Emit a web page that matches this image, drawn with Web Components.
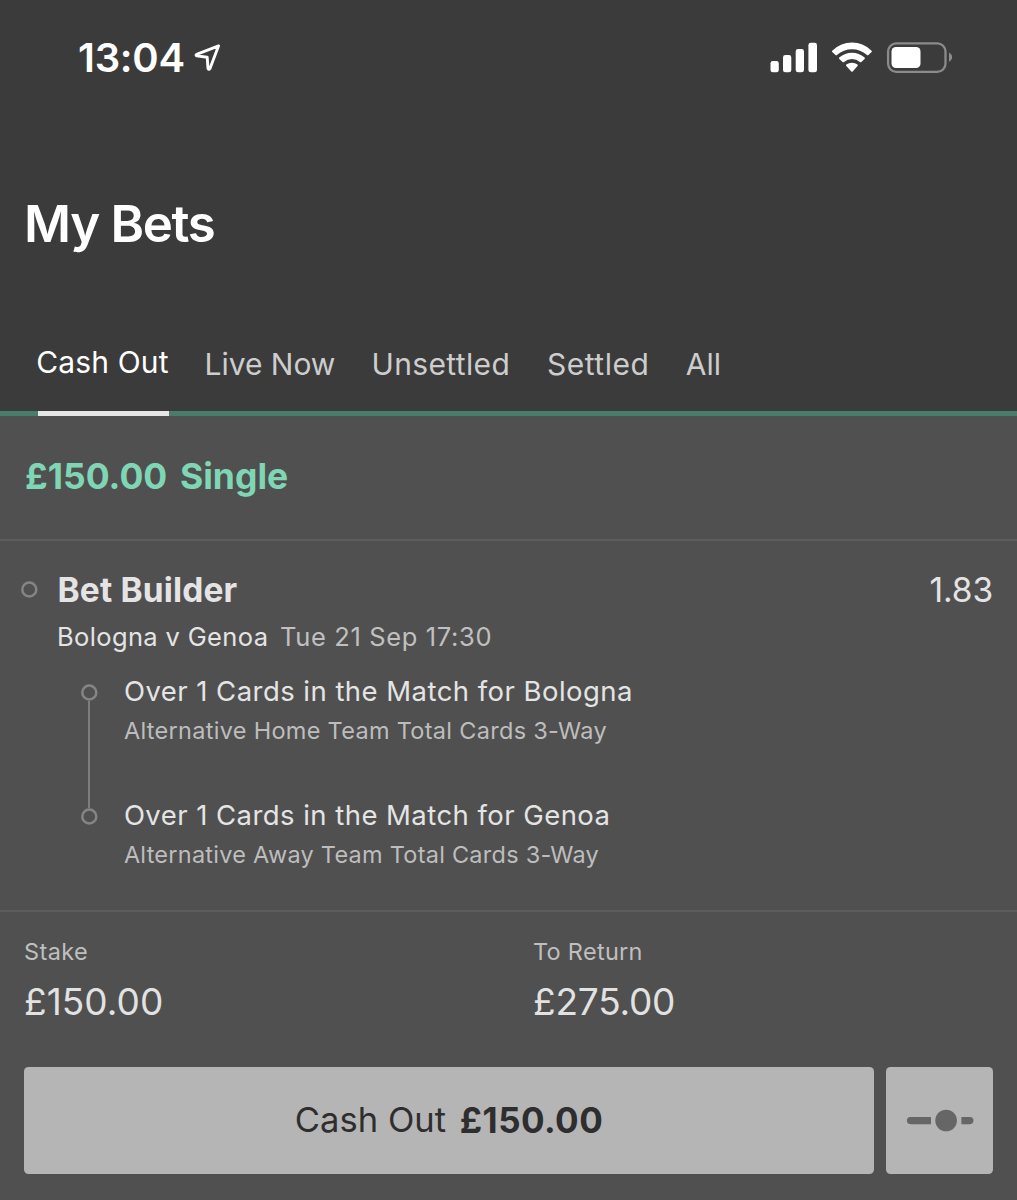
<!DOCTYPE html>
<html lang="en">
<head>
<meta charset="utf-8">
<title>My Bets</title>
<style>
html,body{margin:0;background:#505050}
body{font-family:Inter,"Noto Sans",sans-serif;width:1017px;height:1200px;overflow:hidden}
</style>
</head>
<body>
<bets-screen></bets-screen>
<script>
const define = (name, html, init) => customElements.define(name, class extends HTMLElement {
  connectedCallback() {
    if (this.shadowRoot) return;
    const root = this.attachShadow({ mode: 'open' });
    root.innerHTML = html;
    if (init) init.call(this, root);
  }
});

/* A single line of text: size, weight, spacing and line come from attributes. */
define('text-line', `<style>:host{display:block;white-space:pre;flex:none}</style><slot></slot>`, function () {
  const a = n => this.getAttribute(n);
  this.style.fontSize = a('size') + 'px';
  this.style.lineHeight = a('line') + 'px';
  this.style.fontWeight = a('weight') || 400;
  this.style.letterSpacing = (a('spacing') || 0) + 'px';
});

define('status-bar', `<style>
:host{display:flex;justify-content:space-between;height:115px;box-sizing:border-box;padding:0 65px 0 78px;align-items:center;color:#fff}
.time,.icons{display:flex;align-items:center}
.time svg{margin-left:9px}
svg{display:block}
</style>
<div class="time"><text-line size="40" line="40" weight="600" spacing="-0.25">13:04</text-line>
<svg width="30" height="32" viewBox="194 42 30 32"><path d="M218.6 45.8 L196.6 54.4 Q195.4 55.3 196.8 55.9 L207.2 57.2 L208 68.6 Q208.9 70.2 210 68.6 Z" fill="none" stroke="#fff" stroke-width="2.9" stroke-linejoin="round"/></svg></div>
<div class="icons"><svg width="184" height="36" viewBox="768 40 184 36">
<g fill="#fff"><rect x="770.5" y="61" width="8.3" height="11.3" rx="2.4"/><rect x="783" y="55" width="8.3" height="17.3" rx="2.4"/><rect x="795.7" y="49" width="8.3" height="23.3" rx="2.4"/><rect x="808.4" y="42.8" width="8.6" height="29.5" rx="2.4"/>
<path d="M832.2 50.7 Q841 42.6 852 42.6 Q863 42.6 871.6 50.7 Q872.2 51.4 871.6 52 L868.4 55.1 Q867.7 55.7 867 55.1 Q860.3 49.2 852 49.2 Q843.5 49.2 836.9 55.1 Q836.2 55.7 835.5 55.1 L832.2 52 Q831.7 51.4 832.2 50.7 Z"/>
<path d="M839.2 57.6 Q845 52.7 852 52.7 Q859 52.7 864.6 57.6 Q865.3 58.2 864.6 58.9 L861.3 62 Q860.6 62.6 859.9 62 Q856.5 59.1 852 59.1 Q847.5 59.1 844 62 Q843.3 62.6 842.6 62 L839.3 58.9 Q838.6 58.2 839.2 57.6 Z"/>
<path d="M846.3 64.5 Q848.8 62.7 852 62.7 Q855.1 62.7 857.5 64.5 Q858.2 65.1 857.5 65.9 L852.7 71.4 Q852 72.1 851.3 71.4 L846.3 65.9 Q845.6 65.1 846.3 64.5 Z"/>
<rect x="891.5" y="47" width="29" height="21" rx="4.4"/></g>
<rect x="888.1" y="43.3" width="57.4" height="28.6" rx="8.2" fill="none" stroke="#8b8b8b" stroke-width="2.3"/>
<path d="M949 52.5 Q952.2 54.2 952.2 57.2 Q952.2 60.2 949 61.9Z" fill="#8b8b8b"/>
</svg></div>`);

define('tab-item', `<style>
:host{display:flex;flex-direction:column;justify-content:space-between;flex:none;height:85px;box-sizing:border-box;color:#cdcdcd;padding-top:16px}
:host([active]){color:#fff;padding-top:14px}
i{display:block;width:131px;height:5px;background:#e6e6e6;margin-left:1.7px}
:host(:not([active])) i{display:none}
</style><text-line size="30" line="35"><slot></slot></text-line><i></i>`, function (root) {
  this.style.width = this.getAttribute('width') + 'px';
  const t = root.querySelector('text-line');
  t.setAttribute('spacing', this.getAttribute('spacing'));
  t.style.letterSpacing = this.getAttribute('spacing') + 'px';
});

define('tab-strip', `<style>
:host{display:flex;box-sizing:border-box;height:85px;padding-left:36.3px;background:linear-gradient(#487c6b,#487c6b) bottom/100% 5px no-repeat}
</style><slot></slot>`);

define('top-header', `<style>
:host{display:flex;flex-direction:column;height:416px;background:#3b3b3b;color:#fff}
.title{flex:1;box-sizing:border-box;padding:79px 0 0 24px}
</style><status-bar></status-bar><div class="title"><text-line size="51" line="60" weight="600" spacing="-1.31">My Bets</text-line></div>
<tab-strip><tab-item active width="168.2" spacing="0.14">Cash Out</tab-item><tab-item width="167" spacing="-0.02">Live Now</tab-item><tab-item width="175.5" spacing="0.37">Unsettled</tab-item><tab-item width="138.7" spacing="0.52">Settled</tab-item><tab-item width="80" spacing="0.02">All</tab-item></tab-strip>`);

define('ring-mark', `<style>:host{display:block;flex:none;width:17px;height:17px}svg{display:block}</style>
<svg width="17" height="17" viewBox="0 0 17 17"><circle cx="8.3" cy="8.5" r="7" fill="none" stroke="#858585" stroke-width="2.5"/></svg>`);

define('bet-leg', `<style>
:host{display:flex;height:123.5px}
.rail{width:17px;margin-right:26.4px;padding-top:13px;box-sizing:border-box;display:flex;flex-direction:column;align-items:center}
.rail i{width:2px;flex:1;background:#7d7d7d;margin-bottom:-13px}
:host([last]) .rail i{display:none}
.pick{color:#e4e4e4}.market{color:#bdbdbd}
</style><div class="rail"><ring-mark></ring-mark><i></i></div>
<div><div class="pick"><slot name="pick"></slot></div><div class="market"><slot name="market"></slot></div></div>`);

define('bet-selection', `<style>
:host{display:block;box-sizing:border-box;height:371px;padding-top:28px;border-bottom:2px solid #5d5d5d;color:#e4e4e4}
.head{display:flex;align-items:flex-start;height:40px;padding:1px 24px 0 20.5px;box-sizing:border-box}
.head ring-mark{margin-top:11px}
.head text-line{margin-left:20px}
.head .odds{margin-left:auto}
.match{display:flex;padding:8px 0 0 57px}
.date{color:#c0c0c0;width:240px;margin-left:12.5px}
.legs{padding:14px 0 0 80.5px}
</style><div class="head"><ring-mark></ring-mark><text-line size="33.5" line="40" weight="700" spacing="0.15">Bet Builder</text-line><text-line class="odds" size="33.5" line="40" spacing="-0.08">1.83</text-line></div>
<div class="match"><text-line style="width:210.5px" size="25.5" line="40" spacing="0.36">Bologna v Genoa</text-line><text-line class="date" size="25.5" line="40" spacing="0.64">Tue 21 Sep 17:30</text-line></div>
<div class="legs">
<bet-leg><text-line slot="pick" size="27.5" line="40" spacing="0.46">Over 1 Cards in the Match for Bologna</text-line><text-line slot="market" size="23.5" line="39" spacing="0.3">Alternative Home Team Total Cards 3-Way</text-line></bet-leg>
<bet-leg last><text-line slot="pick" size="27.5" line="40" spacing="0.45">Over 1 Cards in the Match for Genoa</text-line><text-line slot="market" size="23.5" line="39" spacing="0.25">Alternative Away Team Total Cards 3-Way</text-line></bet-leg>
</div>`);

define('money-field', `<style>
:host{display:block;flex:none;width:509px}
.label{color:#bfbfbf}.value{color:#e2e2e2;margin-top:10px}
</style><div class="label"><slot name="label"></slot></div><div class="value"><slot></slot></div>`);

define('slider-icon', `<style>:host{display:block}svg{display:block}</style>
<svg width="68" height="24" viewBox="906 1109 68 24" fill="#666"><path d="M931 1117 H910.5 a3.6 3.6 0 0 0 0 7.2 H931Z M961.4 1117 H969.9 a3.6 3.6 0 0 1 0 7.2 H961.4Z"/><circle cx="946.1" cy="1120.5" r="10.8"/></svg>`);

define('cash-button', `<style>
:host{display:flex;box-sizing:border-box;height:107px;border-radius:4.5px;background:#b5b5b5;color:#2e2e2e;align-items:center;justify-content:center}
:host([wide]){padding-bottom:2px}
</style><slot></slot>`);

define('bet-card', `<style>
:host{display:block;background:#505050}
.stake{display:flex;box-sizing:border-box;height:125px;border-bottom:2px solid #5d5d5d;padding:41px 0 0 25px;color:#7fd6b4}
.sums{display:flex;height:155px;box-sizing:border-box;padding:25px 0 0 24px}
.actions{display:flex;gap:12px;padding:0 24px}
</style>
<div class="stake"><text-line style="width:155px" size="35.5" line="40" weight="700" spacing="0">£150.00</text-line><text-line size="35.5" line="40" weight="700" spacing="0">Single</text-line></div>
<bet-selection></bet-selection>
<div class="sums"><money-field><text-line slot="label" size="23.5" line="30" spacing="0.4">Stake</text-line><text-line size="37" line="50" spacing="0.05">£150.00</text-line></money-field><money-field><text-line slot="label" size="23.5" line="30" spacing="0.28">To Return</text-line><text-line size="37" line="50" spacing="-0.2">£275.00</text-line></money-field></div>
<div class="actions"><cash-button wide style="width:850px"><text-line style="width:165px" size="34.5" line="40" spacing="0.05">Cash Out</text-line><text-line size="35" line="40" weight="700" spacing="0.45">£150.00</text-line></cash-button><cash-button style="width:107px"><slider-icon></slider-icon></cash-button></div>`);

define('bets-screen', `<style>:host{display:block;width:1017px;height:1200px;overflow:hidden}</style><top-header></top-header><bet-card></bet-card>`);
</script>
</body>
</html>
